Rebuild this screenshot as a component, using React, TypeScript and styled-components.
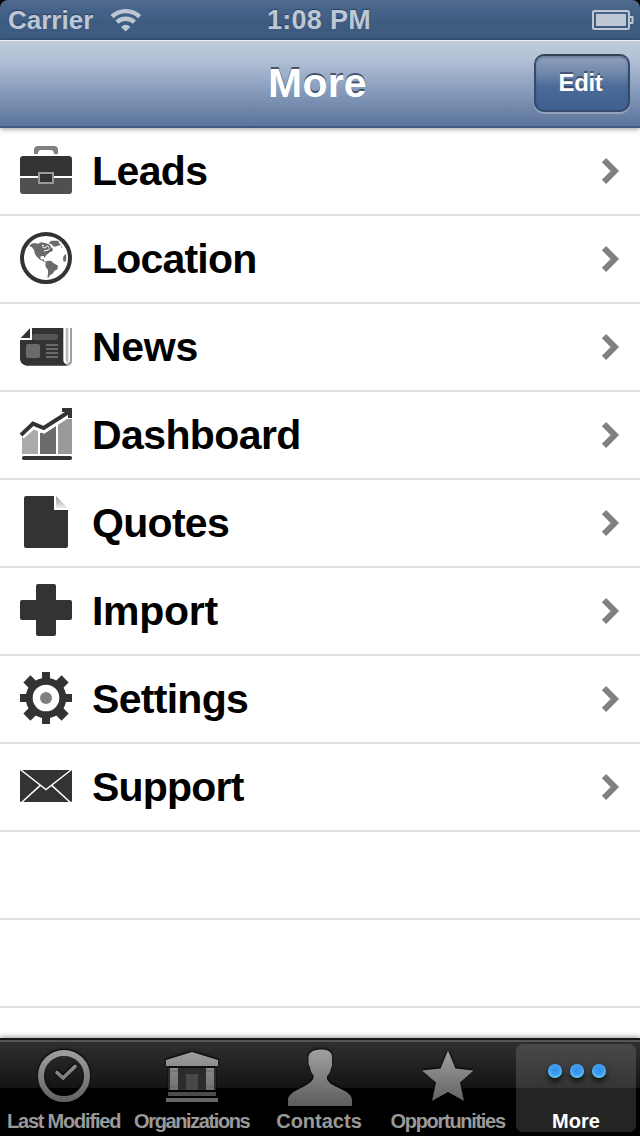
import React from 'react';
import styled, { createGlobalStyle } from 'styled-components';

const GlobalStyle = createGlobalStyle`
  * { box-sizing: border-box; }
  body {
    margin: 0;
    background: #fff;
    font-family: "Liberation Sans", Arial, sans-serif;
    font-weight: 700;
  }
  svg { display: block; flex: none; }
`;

const Screen = styled.div`
  width: 640px;
  height: 1136px;
  display: flex;
  flex-direction: column;
  overflow: hidden;
  background: #fff;
`;

const StatusWrap = styled.div`
  flex: none;
  height: 40px;
  background: #000;
`;

const StatusBar = styled.div`
  height: 40px;
  padding: 0 6px 0 8px;
  display: grid;
  grid-template-columns: 1fr auto 1fr;
  align-items: center;
  border-radius: 8px 8px 0 0;
  background: linear-gradient(#506b8e 0, #46638a 10px, #3e5b80 22px, #3d5a80 38px, #36527a 40px);
  color: #bec8d5;
  text-shadow: 0 -1px 1px rgba(20, 40, 70, 0.6);
`;

const StatusLeft = styled.div`
  display: flex;
  align-items: center;
  gap: 16px;
  font-size: 26px;
  line-height: 40px;
`;

const StatusTime = styled.div`
  padding-right: 4px;
  font-size: 27px;
  line-height: 39px;
  letter-spacing: 0.3px;
`;

const StatusRight = styled.div`
  display: flex;
  justify-content: flex-end;
`;

const NavBar = styled.div`
  flex: none;
  height: 88px;
  padding: 0 10px;
  display: grid;
  grid-template-columns: 1fr auto 1fr;
  align-items: center;
  border-top: 1px solid #eef2f7;
  border-bottom: 2px solid #3d5b84;
  background: linear-gradient(#bfcbdb 0, #b3c1d6 18px, #8da1c0 45px, #5a7399 86px);
  box-shadow: 0 1px 5px rgba(0, 0, 0, 0.4);
  position: relative;
`;

const NavTitle = styled.h1`
  grid-column: 2;
  margin: 0;
  padding: 0 5px 2px 0;
  font-size: 41px;
  line-height: 82px;
  letter-spacing: 0.2px;
  color: #fff;
  text-shadow: 0 -2px 0 rgba(40, 55, 80, 0.75);
`;

const NavButton = styled.button`
  justify-self: end;
  width: 96px;
  height: 58px;
  margin-top: -1px;
  padding: 0 3px 0 0;
  border: 2px solid #35496a;
  border-top-color: #36435a;
  border-radius: 10px;
  background: linear-gradient(#91a3bf 0, #6e86aa 18px, #4b6b98 30px, #3f608f 54px);
  box-shadow: 0 2px 0 rgba(255, 255, 255, 0.28), inset 0 2px 2px rgba(40, 55, 80, 0.3);
  color: #fff;
  font: 700 24px/54px "Liberation Sans", Arial, sans-serif;
  letter-spacing: -0.3px;
  text-shadow: 0 -2px 0 rgba(40, 55, 80, 0.65);
`;

const List = styled.ul`
  flex: 1;
  min-height: 0;
  margin: 0;
  padding: 0;
  list-style: none;
  overflow: hidden;
`;

const Row = styled.li`
  height: 88px;
  padding: 0 20px;
  display: flex;
  align-items: center;
  border-bottom: 2px solid #e0e0e0;
  color: #000;
`;

const RowIcon = styled.span`
  height: 52px;
  margin-top: -2px;
`;

const RowLabel = styled.span<{ $tracking?: number }>`
  flex: 1;
  margin-left: 20px;
  font-size: 41px;
  line-height: 86px;
  letter-spacing: ${(p) => p.$tracking ?? 0}px;
`;

const TabBar = styled.nav`
  flex: none;
  height: 98px;
  display: flex;
  position: relative;
  border-top: 2px solid #161616;
  background: linear-gradient(#545454 0, #545454 2px, #2f2f2f 2px, #141414 48px, #000 48px);
  box-shadow: 0 -1px 5px rgba(0, 0, 0, 0.4);
`;

const Tab = styled.div<{ $active?: boolean }>`
  width: ${(p) => (p.$active ? 120 : 128)}px;
  height: ${(p) => (p.$active ? 88 : 96)}px;
  margin: ${(p) => (p.$active ? '4px 4px' : '0')};
  padding-top: ${(p) => (p.$active ? 0 : 4)}px;
  display: flex;
  flex-direction: column;
  align-items: center;
  border-radius: 7px;
  background: ${(p) => (p.$active ? 'linear-gradient(#494949 0, #353535 44px, #252525 44px, #252525 100%)' : 'none')};
  color: ${(p) => (p.$active ? '#fff' : '#999')};
`;

const TabLabel = styled.span<{ $tracking?: number }>`
  font-size: 20px;
  line-height: 24px;
  margin-top: 1px;
  padding-right: 2px;
  white-space: nowrap;
  letter-spacing: ${(p) => p.$tracking ?? 0}px;
  margin-right: ${(p) => p.$tracking ?? 0}px;
`;

const INK = '#333';

const WifiIcon = () => (
  <svg width="34" height="26" viewBox="0 0 34 26" fill="none" stroke="#bec8d5" strokeWidth="4.4">
    <path d="M3 9.6a20 20 0 0 1 27.600 0" />
    <path d="M7.900 15.200a12.800 12.800 0 0 1 17.600 0" />
    <path d="M16.700 24.500 12 20q4.700-4.500 9.400 0z" fill="#bec8d5" stroke="none" />
  </svg>
);

const BatteryIcon = () => (
  <svg width="42" height="20" viewBox="0 0 42 20">
    <rect x="1" y="1" width="36" height="18" rx="1.5" fill="none" stroke="#bec8d5" strokeWidth="2" />
    <rect x="4" y="4" width="30" height="12" fill="#bec8d5" />
    <path d="M38 7h2.5v6H38" fill="none" stroke="#bec8d5" strokeWidth="2" strokeLinejoin="round" />
  </svg>
);

const Chevron = () => (
  <svg width="20" height="28" viewBox="0 0 20 28" fill="none" stroke="#808080" strokeWidth="6">
    <path d="M4 3.200 14.800 14 4 24.800" />
  </svg>
);

const Glyph = ({ children }: { children: React.ReactNode }) => (
  <svg width="52" height="52" viewBox="0 0 156 156">{children}</svg>
);

const Briefcase = () => (
  <Glyph>
    <path d="M42 30V18q0-12 12-12h48q12 0 12 12v12h-12q0-12-10-12H64q-10 0-10 12z" fill="#808080" />
    <path d="M0 96V46q0-10 10-10h136q10 0 10 10v50z" fill={INK} />
    <path d="M0 102h156v38q0 10-10 10H10q-10 0-10-10z" fill="#505050" />
    <rect x="57" y="87" width="42" height="30" fill={INK} stroke="#999" strokeWidth="6" />
  </Glyph>
);

const Globe = () => (
  <Glyph>
    <circle cx="78" cy="78" r="72" fill="#fff" stroke={INK} strokeWidth="12" />
    <g fill="#6b6b6b">
      <path d="M27 41 35 35 43 33 54 35 64 31 78 34 90 39 93 46 99 51 97 58 90 60 84 65 79 69 76 74 74 78 71 72 62 73 61 79 66 83 71 81 72 86 78 89 76 91 68 87 58 82 49 73 44 64 42 54 36 46z" />
      <path d="M85 34 94 26 115 26 117 33 123 38 112 42 106 44 99 42 94 36z" />
      <path d="M77 89 84 86 94 87 100 93 114 101 112 112 103 117 98 125 90 130 87 136 82 137 84 126 84 114 77 104 76 97z" />
      <path d="M130 74 134 68 138 67 139 80 136 89 131 89 129 81z" />
      <path d="M122 42l6 3-4 2z" />
    </g>
    <path d="M67 45l7 3 8-6 6 5M72 57l12-3 5-5M66 40l6 1" fill="none" stroke="#fff" strokeWidth="3" />
  </Glyph>
);

const Newspaper = () => (
  <Glyph>
    <path d="M36 24h94v97q0 9 14 16H20Q0 132 0 116V60h36z" fill={INK} />
    <path d="M2 54 30 25v29z" fill={INK} />
    <path d="M137 24h8v106q-8-3-8-12z" fill="#bbb" />
    <path d="M150 24h6v99q0 11-11 14-6-1-9-7 14 4 14-12z" fill="#a0a0a0" />
    <rect x="36" y="42" width="78" height="18" rx="7" fill="#555" />
    <rect x="18" y="72" width="42" height="42" rx="6" fill="#6b6b6b" />
    <path d="M78 75h36M78 87h36M78 99h36M78 111h36" stroke="#6b6b6b" strokeWidth="6" />
  </Glyph>
);

const ChartIcon = () => (
  <Glyph>
    <path d="M6 138V86L38 62l16 6v70z" fill="#aaa" />
    <path d="M60 138V74l14 2 34-22v84z" fill="#6b6b6b" />
    <path d="M114 138V50l26-17h16v105z" fill="#999" />
    <path d="M3 82 40 49 71 63 148 13v20" fill="none" stroke="#fff" strokeWidth="25" />
    <path d="M3 81 39 47 71 60 146 12" fill="none" stroke={INK} strokeWidth="12" />
    <path d="M126 0h30v30h-12V20L136 12h-10z" fill={INK} />
    <rect x="6" y="144" width="150" height="12" rx="5" fill={INK} />
  </Glyph>
);

const PageIcon = () => (
  <Glyph>
    <defs>
      <linearGradient id="fold" x1="0.3" y1="1" x2="0.3" y2="0">
        <stop offset="0" stopColor="#eee" />
        <stop offset="1" stopColor="#999" />
      </linearGradient>
    </defs>
    <path d="M12 6q0-6 6-6h84v42h42v108q0 6-6 6H18q-6 0-6-6z" fill={INK} />
    <path d="M108 0v36h35z" fill="url(#fold)" />
  </Glyph>
);

const PlusIcon = () => (
  <Glyph>
    <rect x="48" width="60" height="156" rx="6" fill={INK} />
    <rect y="48" width="156" height="60" rx="6" fill={INK} />
  </Glyph>
);

const GearIcon = () => (
  <Glyph>
    {[0, 90].map((a) => (
      <rect key={a} x="66" y="0" width="24" height="156" fill={INK} transform={`rotate(${a} 78 78)`} />
    ))}
    {[45, 135].map((a) => (
      <rect key={a} x="63" y="-3" width="30" height="162" fill={INK} transform={`rotate(${a} 78 78)`} />
    ))}
    <circle cx="78" cy="78" r="61" fill={INK} />
    <circle cx="78" cy="78" r="40" fill="#fff" />
    <circle cx="78" cy="78" r="18" fill="#808080" />
  </Glyph>
);

const Envelope = () => (
  <Glyph>
    <rect y="30" width="156" height="96" rx="4" fill={INK} />
    <path d="M3 30 78 89 153 30M3 129 60 77M153 129 96 77" fill="none" stroke="#fff" strokeWidth="4.500" />
  </Glyph>
);

const TabGlyph = ({ children }: { children: React.ReactNode }) => (
  <svg width="64" height="64" viewBox="0 0 64 64" style={{ filter: 'drop-shadow(0 -1px 1px #000)' }}>
    <defs>
      <linearGradient id="metal" gradientUnits="userSpaceOnUse" x1="0" y1="4" x2="0" y2="62">
        <stop offset="0" stopColor="#a3a3a3" />
        <stop offset="1" stopColor="#5c5c5c" />
      </linearGradient>
    </defs>
    {children}
  </svg>
);

const ClockIcon = () => (
  <TabGlyph>
    <circle cx="32" cy="32" r="23" fill="none" stroke="url(#metal)" strokeWidth="6" />
    <path d="M25 28.500 31 34 43 22.500" fill="none" stroke="url(#metal)" strokeWidth="3.600" strokeLinecap="round" />
  </TabGlyph>
);

const BankIcon = () => (
  <TabGlyph>
    <path d="M6 16 32 8l26 8v6H6z" fill="url(#metal)" />
    <path d="M8 24h48v22H8z" fill="#2c2c2c" />
    <path d="M10 24h8v22h-8zM46 24h8v22h-8z" fill="url(#metal)" />
    <path d="M10 27h8M46 27h8M10 43h8M46 43h8" stroke="#666" strokeWidth="1" />
    <path d="M26 30h12v16H26z" fill="#484848" />
    <path d="M8 48h48v4H8z" fill="#4c4c4c" />
    <path d="M6 54h52v4H6z" fill="#666" />
  </TabGlyph>
);

const PersonIcon = () => (
  <TabGlyph>
    <path d="M0 62v-6c0-4 4-8 11-11 8-4 13-7 14.500-11v-3c-2-2-3-4-3.500-8-1.500-2-1.500-4-1.500-5V14c0-5 4-8.500 12-8.500S44 8 44 13v7c0 2 0 3-1 4-.5 4-2 6-4 8v3c1.500 4 7 7 14 10s11 7 11 11v6z" fill="url(#metal)" />
  </TabGlyph>
);

const StarIcon = () => (
  <TabGlyph>
    <path d="M32 6.500 39.500 24.500 57.500 26.500 44 38.500 48 57 32 48 16 57 20 38.500 6 26.500 24.500 24.500z" fill="url(#metal)" />
  </TabGlyph>
);

const DotsIcon = () => (
  <svg width="64" height="64" viewBox="0 0 64 64" style={{ filter: 'drop-shadow(0 4px 3px rgba(0,0,0,.75))' }}>
    <defs>
      <radialGradient id="bead" cx="50%" cy="42%" r="58%">
        <stop offset="0" stopColor="#3590ea" />
        <stop offset="0.6" stopColor="#3f9cf2" />
        <stop offset="1" stopColor="#66d2ff" />
      </radialGradient>
    </defs>
    {[11, 33, 55].map((x) => (
      <circle key={x} cx={x} cy="27" r="7" fill="url(#bead)" />
    ))}
  </svg>
);

const rows = [
  { label: 'Leads', Icon: Briefcase, tracking: -0.6 },
  { label: 'Location', Icon: Globe, tracking: -0.8 },
  { label: 'News', Icon: Newspaper, tracking: -0.3 },
  { label: 'Dashboard', Icon: ChartIcon, tracking: -0.6 },
  { label: 'Quotes', Icon: PageIcon, tracking: -0.7 },
  { label: 'Import', Icon: PlusIcon, tracking: -0.3 },
  { label: 'Settings', Icon: GearIcon, tracking: -0.7 },
  { label: 'Support', Icon: Envelope, tracking: -0.8 },
];

const tabs = [
  { label: 'Last Modified', Icon: ClockIcon, tracking: -1.2 },
  { label: 'Organizations', Icon: BankIcon, tracking: -1.4 },
  { label: 'Contacts', Icon: PersonIcon, tracking: 0 },
  { label: 'Opportunities', Icon: StarIcon, tracking: -1.3 },
];

export default function App() {
  return (
    <Screen>
      <GlobalStyle />
      <StatusWrap>
        <StatusBar>
          <StatusLeft>
            Carrier
            <WifiIcon />
          </StatusLeft>
          <StatusTime>1:08 PM</StatusTime>
          <StatusRight>
            <BatteryIcon />
          </StatusRight>
        </StatusBar>
      </StatusWrap>
      <NavBar>
        <NavTitle>More</NavTitle>
        <NavButton>Edit</NavButton>
      </NavBar>
      <List>
        {rows.map(({ label, Icon, tracking }) => (
          <Row key={label}>
            <RowIcon>
              <Icon />
            </RowIcon>
            <RowLabel $tracking={tracking}>{label}</RowLabel>
            <Chevron />
          </Row>
        ))}
        <Row />
        <Row />
      </List>
      <TabBar>
        {tabs.map(({ label, Icon, tracking }) => (
          <Tab key={label}>
            <Icon />
            <TabLabel $tracking={tracking}>{label}</TabLabel>
          </Tab>
        ))}
        <Tab $active>
          <DotsIcon />
          <TabLabel style={{ paddingRight: 0 }}>More</TabLabel>
        </Tab>
      </TabBar>
    </Screen>
  );
}
